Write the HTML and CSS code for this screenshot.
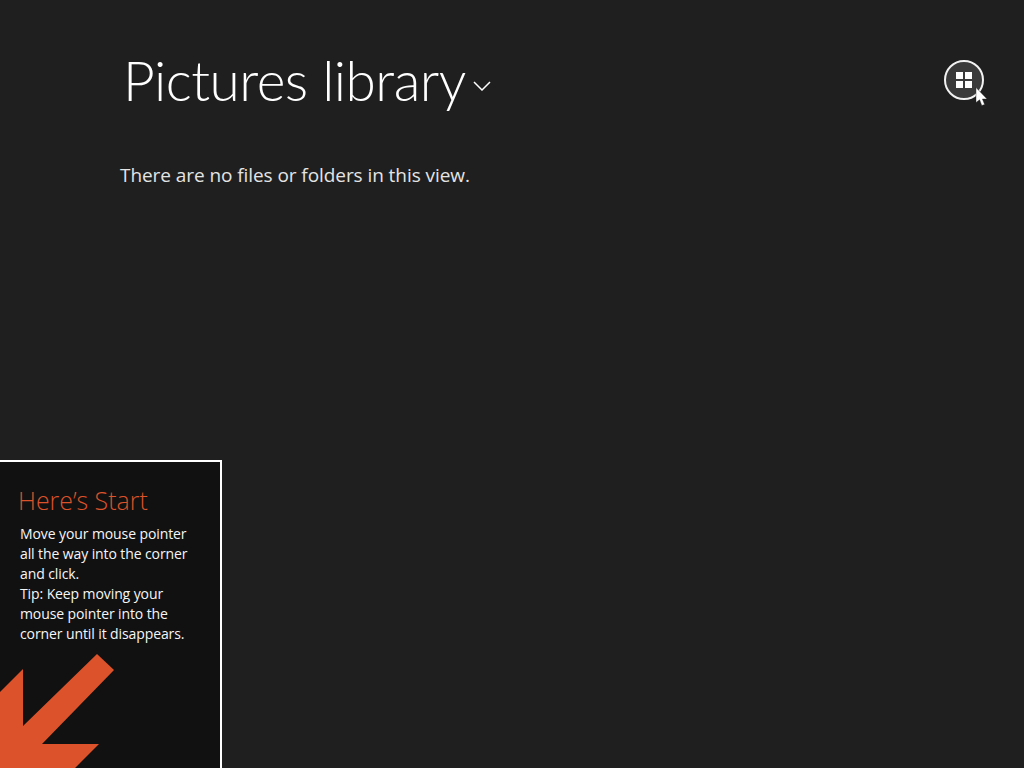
FILE: index.html
```html
<!DOCTYPE html>
<html lang="en">
<head>
  <meta charset="UTF-8">
  <title>Pictures library</title>
  <link rel="stylesheet" href="styles.css">
</head>
<body>
  <div class="page">
    <div class="header">
      <h1 class="title">Pictures library</h1>
      <svg class="chevron" width="18" height="10" viewBox="0 0 18 10">
        <path d="M1 1 L9 9 L17 1" fill="none" stroke="#fff" stroke-width="1.5"/>
      </svg>
      <div class="view-button">
        <span></span><span></span><span></span><span></span>
      </div>
    </div>
    <p class="empty">There are no files or folders in this view.</p>
  </div>

  <svg class="pointer" width="13" height="20" viewBox="0 0 13 20">
    <path d="M1 0.5 L1 15.5 L4.6 12.8 L6.8 18.5 L9.6 17.4 L7.4 12 L12 12 Z" fill="#fff" stroke="#222" stroke-width="0.4"/>
  </svg>

  <div class="start-tip">
    <h2 class="tip-title">Here’s Start</h2>
    <p class="tip-text">Move your mouse pointer<br>all the way into the corner<br>and click.<br>Tip: Keep moving your<br>mouse pointer into the<br>corner until it disappears.</p>
    <svg class="tip-arrow" width="220" height="116" viewBox="0 0 220 116">
      <path d="M97 2 L114 18 L42 92 L99 92 L75 116 L0 116 L0 40 L23 17 L23 74 Z" fill="#dc532b"/>
    </svg>
  </div>
</body>
</html>
```

FILE: styles.css
```css
html, body {
  margin: 0;
  height: 100%;
  overflow: hidden;
}

body {
  background-color: #1f1f1f;
  color: #fff;
  font-family: "Open Sans", "Liberation Sans", sans-serif;
}

.page {
  padding: 46px 40px 0 120px;
}

.header {
  display: flex;
  align-items: center;
  height: 68px;
}

.title {
  margin: 0 0 0 3px;
  font-family: Lato, "Open Sans", sans-serif;
  font-size: 55px;
  font-weight: 300;
  line-height: 68px;
  letter-spacing: -0.5px;
}

.chevron {
  margin: 11px 0 0 7px;
}

.view-button {
  display: grid;
  grid-template-columns: 7px 7px;
  grid-template-rows: 7px 7px;
  gap: 2px;
  place-content: center;
  box-sizing: border-box;
  width: 40px;
  height: 40px;
  margin: 0 0 0 auto;
  border: 2px solid #f2f2f2;
  border-radius: 50%;
  background-color: #3a3a3a;
}

.view-button span {
  background-color: #fff;
}

.empty {
  margin: 48px 0 0;
  font-size: 19px;
  line-height: 26px;
  letter-spacing: -0.07px;
  color: #e4e4e4;
}

.pointer {
  position: absolute;
  left: 975px;
  top: 87px;
}

.start-tip {
  position: absolute;
  left: 0;
  bottom: 0;
  width: 220px;
  height: 306px;
  border-top: 2px solid #fff;
  border-right: 2px solid #fff;
  background-color: #111;
  overflow: hidden;
}

.tip-title {
  margin: 22px 0 0 18px;
  font-size: 24.9px;
  font-weight: 300;
  line-height: 32px;
  color: #dc532b;
}

.tip-text {
  margin: 8px 0 0 20px;
  font-size: 14px;
  line-height: 20px;
  letter-spacing: -0.1px;
  color: #f6f6f6;
}

.tip-arrow {
  position: absolute;
  left: 0;
  bottom: 0;
}
```
